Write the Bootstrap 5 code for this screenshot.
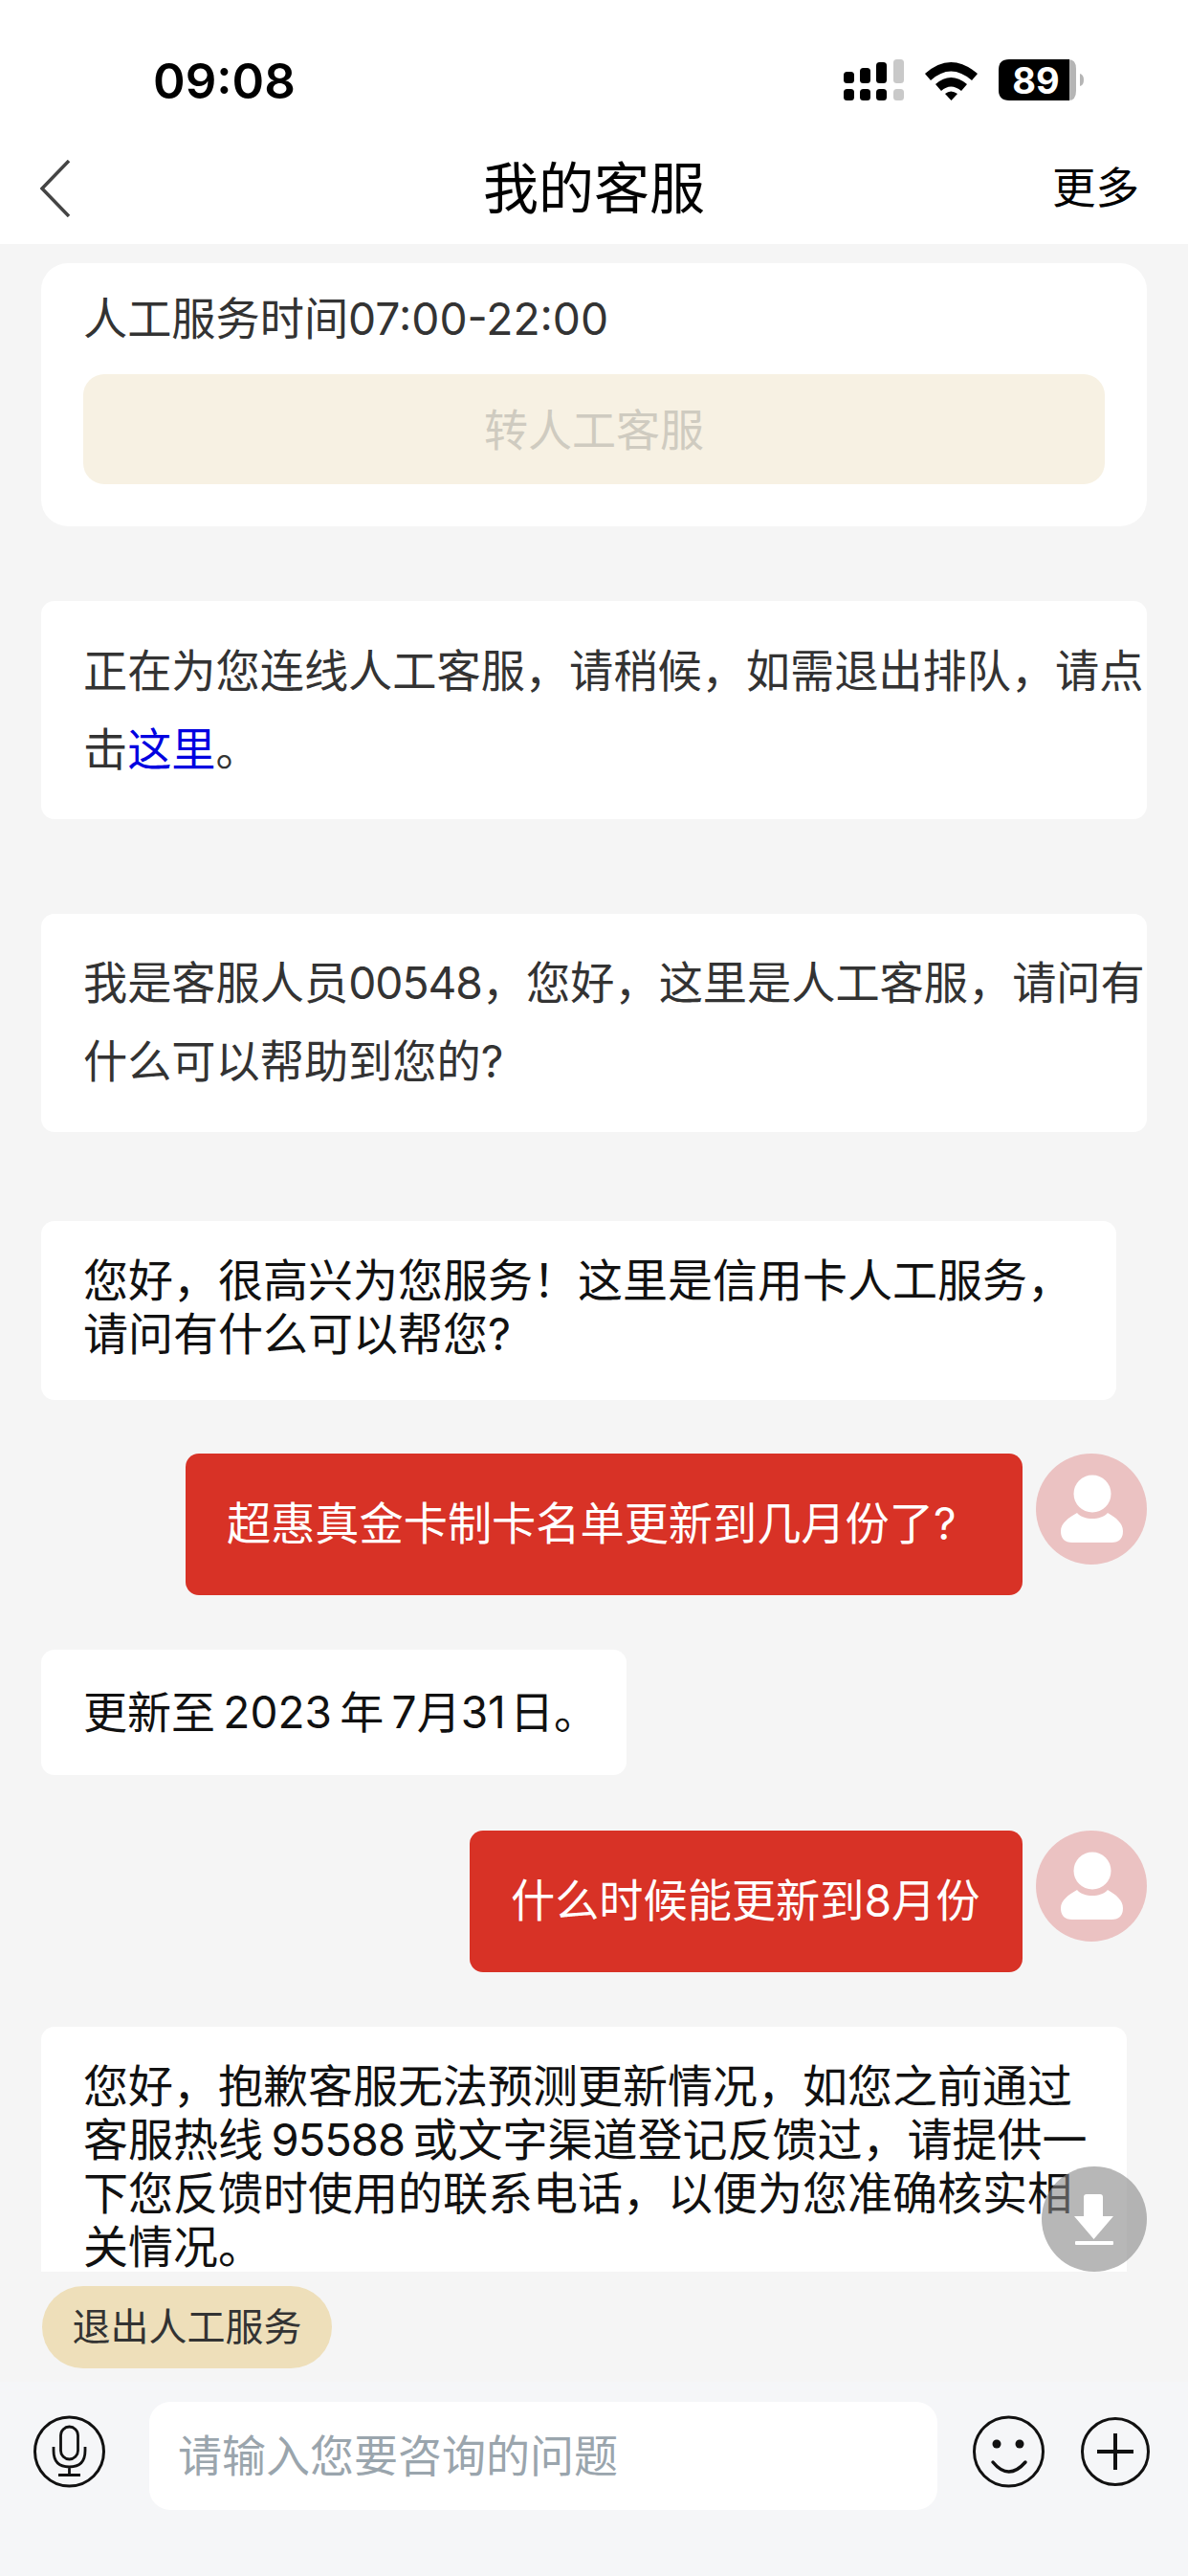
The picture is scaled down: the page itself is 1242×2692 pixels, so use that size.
<!DOCTYPE html>
<html lang="zh-CN">
<head>
    <meta charset="UTF-8">
    <meta name="viewport" content="width=device-width, initial-scale=1.0">
    <title>我的客服</title>
    <link href="https://cdn.jsdelivr.net/npm/bootstrap@5.3.3/dist/css/bootstrap.min.css" rel="stylesheet">
    <script src="https://cdn.jsdelivr.net/npm/bootstrap@5.3.3/dist/js/bootstrap.bundle.min.js"></script>
    <style>
        html, body {margin: 0; height: 2692px; overflow: hidden;}
        body {width: 1242px; background: #f5f5f5; font-family: Inter, "Noto Sans CJK SC", sans-serif; font-size: 46.200px; color: #000;}
        .phone {height: 2692px;}
        .status-bar {height: 150px; background: #fff; padding: 0 106px 0 160px;}
        .clock {font-size: 51px; font-weight: 600; line-height: 1; margin-top: 18px;}
        .status-icons {margin-top: 20px;}
        .title-bar {height: 105px; background: #fff; padding: 0 50px 12px 42px;}
        .title-text {font-size: 58px; line-height: 1;}
        .more-text {font-size: 45.500px; line-height: 1; white-space: nowrap;}
        .back-slot {width: 100px;}
        .more-slot {width: 92px;}
        .chat-area {height: 2119px; overflow: hidden; padding: 20px 43px 0 43px;}
        .chat-box {background: #fff; border-radius: 14px; padding: 0 0 0 44px;}
        .sys-color {color: #333;}
        .box-hours {height: 275px; border-radius: 28px; padding: 30px 44px 0 44px;}
        .hours-line {line-height: 56px; margin-bottom: 30px;}
        .human-btn {height: 115px; background: #f7f1e3; color: #cfcbc0; border-radius: 22px; font-size: 46px; padding-top: 2px;}
        .box-wide {padding-top: 32px; padding-bottom: 32px; line-height: 82px; margin-top: 78px;}
        .box-wide.second {margin-top: 99px; padding-top: 31px; padding-bottom: 33px;}
        .blue-link {color: #0000e0; text-decoration: none;}
        .num-tight {letter-spacing: -1px;}
        .bubble-in {font-size: 47px; line-height: 56px; padding: 34px 44px 41px 44px; color: #111;}
        .first-in {width: 1124px; margin-top: 93px;}
        .date-in {width: 612px; margin-top: 57px; padding: 37px 0 38px 44px; font-size: 46px; white-space: nowrap;}
        .last-in {width: 1135px; margin-top: 57px; height: 300px; padding-right: 30px; border-radius: 14px 14px 0 0;}
        .row-out.one {margin-top: 56px;}
        .row-out.two {margin-top: 58px;}
        .bubble-out {background: #d83226; color: #fff; border-radius: 14px; height: 148px; padding: 0 0 0 43px; margin-right: 14px; font-size: 46.200px; white-space: nowrap;}
        .out-long {width: 875px;}
        .out-short {width: 578px;}
        .avatar-round {width: 116px; height: 116px; flex: none;}
        .scroll-down {position: absolute; left: 1089px; top: 2264px; width: 110px; height: 110px;}
        .pill-row {height: 115px; padding: 15px 0 0 44px;}
        .exit-pill {height: 86px; width: 303px; background: #eedfba; border-radius: 43px; color: #333; font-size: 40px;}
        .input-row {height: 203px; background: #f5f6f8; padding: 21px 40px 0 35px; align-items: flex-start;}
        .input-box {width: 824px; height: 113px; background: #fff; border-radius: 22px; margin: 0 37px 0 46px; padding-left: 30px; color: #9aa5ad; font-size: 46px;}
        .round-icon {flex: none; margin-top: 14px;}
        .plus-icon {margin-top: 16px;}
    </style>
</head>
<body>
<div class="phone d-flex flex-column position-relative">
    <div class="status-bar d-flex justify-content-between align-items-center">
        <div class="clock">09:08</div>
        <svg class="status-icons" width="256" height="46" viewBox="0 0 256 46">
            <!-- signal -->
            <g fill="#000">
                <rect x="2" y="13" width="11" height="12" rx="3.500"/><rect x="19" y="9" width="11" height="16" rx="3.500"/><rect x="36" y="3" width="11" height="22" rx="3.500"/>
                <rect x="2" y="31" width="11" height="12" rx="3.500"/><rect x="19" y="31" width="11" height="12" rx="3.500"/><rect x="36" y="31" width="11" height="12" rx="3.500"/>
            </g>
            <rect x="54" y="0" width="11" height="25" rx="3.500" fill="#c9c9c9"/>
            <rect x="54" y="31" width="11" height="12" rx="3.500" fill="#c9c9c9"/>
            <!-- wifi -->
            <g fill="#000">
                <path d="M87 15 Q114 -9 142 15 L136 22 Q114 3 93 22Z"/>
                <path d="M98 26 Q114 12 131 26 L125 33 Q114 24 104 33Z"/>
                <path d="M108 36 Q114 31 121 36 L114.500 43Z"/>
            </g>
            <!-- battery -->
            <path d="M232 0 H237 Q245 0 245 10 V33 Q245 43 237 43 H232Z" fill="#b5b5b5"/>
            <path d="M249 15 Q253 16 253 21.500 Q253 27 249 28Z" fill="#b5b5b5"/>
            <path d="M175 0 H238 V43 H175 Q164 43 164 32 V11 Q164 0 175 0Z" fill="#000"/>
            <text x="203" y="36" font-family="Inter" font-size="38" font-weight="700" fill="#fff" text-anchor="middle">89</text>
        </svg>
    </div>
    <div class="title-bar d-flex justify-content-between align-items-center">
        <div class="back-slot">
            <svg class="d-block" width="32" height="60" viewBox="0 0 32 60"><path d="M30 1 L2 30 L30 59" fill="none" stroke="#444" stroke-width="3.500"/></svg>
        </div>
        <div class="title-text">我的客服</div>
        <div class="more-slot more-text">更多</div>
    </div>

    <div class="chat-area">
        <div class="chat-box box-hours sys-color">
            <div class="hours-line">人工服务时间07:00-22:00</div>
            <div class="human-btn d-flex justify-content-center align-items-center">转人工客服</div>
        </div>

        <div class="chat-box box-wide sys-color">正在为您连线人工客服，请稍候，如需退出排队，请点击<a class="blue-link" href="#">这里</a>。</div>
        <div class="chat-box box-wide second sys-color">我是客服人员<span class="num-tight">00548</span>，您好，这里是人工客服，请问有什么可以帮助到您的?</div>

        <div class="chat-box bubble-in first-in">您好，很高兴为您服务！这里是信用卡人工服务，请问有什么可以帮您?</div>

        <div class="row-out one d-flex justify-content-end align-items-start">
            <div class="bubble-out out-long d-flex align-items-center">超惠真金卡制卡名单更新到几月份了?</div>
            <svg class="avatar-round" viewBox="0 0 116 116">
                <circle cx="58" cy="58" r="58" fill="#ebc2c2"/>
                <circle cx="59" cy="42" r="19.500" fill="#fff"/>
                <path d="M43 62 C50 70 68 70 75 62 C84 67 91 73 91 81 Q91 93 79 93 H38 Q26 93 26 81 C26 73 34 67 43 62Z" fill="#fff"/>
            </svg>
        </div>

        <div class="chat-box bubble-in date-in">更新至&#8201;2023&#8201;年&#8201;7月31&#8202;日。</div>

        <div class="row-out two d-flex justify-content-end align-items-start">
            <div class="bubble-out out-short d-flex align-items-center">什么时候能更新到8月份</div>
            <svg class="avatar-round" viewBox="0 0 116 116">
                <circle cx="58" cy="58" r="58" fill="#ebc2c2"/>
                <circle cx="59" cy="42" r="19.500" fill="#fff"/>
                <path d="M43 62 C50 70 68 70 75 62 C84 67 91 73 91 81 Q91 93 79 93 H38 Q26 93 26 81 C26 73 34 67 43 62Z" fill="#fff"/>
            </svg>
        </div>

        <div class="chat-box bubble-in last-in">您好，抱歉客服无法预测更新情况，如您之前通过客服热线&#8201;<span class="num-tight">95588</span>&#8201;或文字渠道登记反馈过，请提供一下您反馈时使用的联系电话，以便为您准确核实相关情况。</div>
    </div>

    <svg class="scroll-down" viewBox="0 0 110 110">
        <circle cx="55" cy="55" r="55" fill="#878787" fill-opacity=".6"/>
        <path d="M44 32 Q44 29 47 29 H61 Q64 29 64 32 V52 H75 L54.500 76 L34 52 H44Z" fill="#fff"/>
        <rect x="35" y="78" width="40" height="4" rx="1" fill="#fff"/>
    </svg>

    <div class="pill-row">
        <div class="exit-pill d-flex justify-content-center align-items-center">退出人工服务</div>
    </div>

    <div class="input-row d-flex">
        <svg class="round-icon" width="75" height="76" viewBox="0 0 75 76">
            <circle cx="37.500" cy="38" r="36" fill="none" stroke="#111" stroke-width="3"/>
            <rect x="28.500" y="12" width="18" height="34" rx="9" fill="none" stroke="#111" stroke-width="2.800"/>
            <path d="M21 33 V37 Q21 54 37.500 54 Q54 54 54 37 V33 M37.500 54 V62 M26 62.500 H49" fill="none" stroke="#111" stroke-width="2.800"/>
        </svg>
        <div class="input-box d-flex align-items-center">请输入您要咨询的问题</div>
        <svg class="round-icon" width="75" height="76" viewBox="0 0 75 76">
            <circle cx="37.500" cy="38" r="36" fill="none" stroke="#111" stroke-width="3"/>
            <circle cx="25" cy="30" r="4.500" fill="#111"/><circle cx="49" cy="30" r="4.500" fill="#111"/>
            <path d="M21 49 Q37.500 69 55 49" fill="none" stroke="#111" stroke-width="3.500" stroke-linecap="round"/>
        </svg>
        <svg class="round-icon plus-icon ms-auto" width="72" height="72" viewBox="0 0 72 72">
            <circle cx="36" cy="36" r="34.500" fill="none" stroke="#111" stroke-width="3"/>
            <path d="M17 36 H55 M36 17 V55" fill="none" stroke="#111" stroke-width="4"/>
        </svg>
    </div>
</div>
</body>
</html>
